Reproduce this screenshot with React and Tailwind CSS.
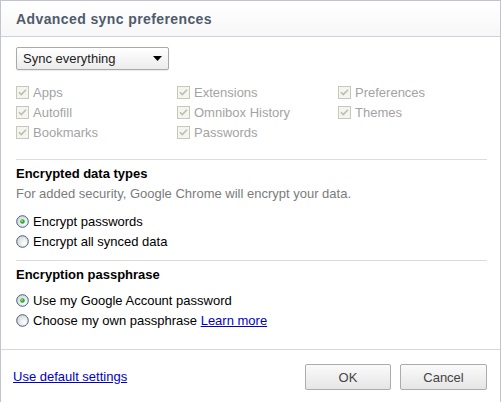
import React from "react";

const font = { fontFamily: '"Liberation Sans", Arial, sans-serif' };

function Check({ label }) {
  return (
    <div className="flex h-[20px] items-center">
      <svg width="13" height="13" viewBox="0 0 13 13" className="shrink-0">
        <rect x="0.5" y="0.5" width="12" height="12" fill="#f5f5f0" stroke="#c9c7ba" />
        <path d="M3 6.2 L5.3 8.6 L10 3.8" fill="none" stroke="#bdbcae" strokeWidth="1.6" />
      </svg>
      <span className="ml-[4px] text-[13px] leading-none text-[#a3a3a3]">{label}</span>
    </div>
  );
}

function Radio({ checked, children }) {
  return (
    <div className="flex h-[20px] items-center">
      <svg width="13" height="13" viewBox="0 0 13 13" className="shrink-0">
        <defs>
          <radialGradient id="rg" cx="0.65" cy="0.65" r="0.7">
            <stop offset="0" stopColor="#ffffff" />
            <stop offset="1" stopColor="#d6d6ce" />
          </radialGradient>
        </defs>
        <circle cx="6.5" cy="6.5" r="5.8" fill="url(#rg)" stroke="#3f5f8c" strokeWidth="1" />
        {checked && <circle cx="6.5" cy="6.5" r="2.3" fill="#2aa83a" />}
        {checked && <circle cx="6" cy="6" r="0.9" fill="#8ee08f" />}
      </svg>
      <span className="ml-[4px] text-[13px] leading-none text-black">{children}</span>
    </div>
  );
}

export default function App() {
  return (
    <div style={font} className="h-[402px] w-[502px] bg-white">
      <div className="flex h-[402px] w-[501px] flex-col border-x border-t border-[#bfc4cf] bg-white">
        <div className="flex h-[36px] shrink-0 items-center border-b border-[#cdd1da] bg-gradient-to-b from-[#ffffff] to-[#f7f7f7] pl-[15px]">
          <span className="text-[14px] font-bold leading-none tracking-[0.4px] text-[#4f5a6c]">
            Advanced sync preferences
          </span>
        </div>

        <div className="flex flex-col pl-[15px] pr-[13px]">
          <div className="mt-[10px] flex h-[23px] w-[153px] items-center justify-between rounded-[2px] border border-[#a9a9a9] bg-gradient-to-b from-[#ffffff] to-[#ececec] pl-[6px] pr-[6px] shadow-[0_1px_1px_rgba(0,0,0,0.08)]">
            <span className="text-[13px] leading-none text-[#222]">Sync everything</span>
            <svg width="9" height="5" viewBox="0 0 9 5">
              <path d="M0 0 H9 L4.5 5 Z" fill="#000" />
            </svg>
          </div>

          <div className="mt-[12px] grid grid-cols-[161px_161px_1fr]">
            <div className="flex flex-col">
              <Check label="Apps" />
              <Check label="Autofill" />
              <Check label="Bookmarks" />
            </div>
            <div className="flex flex-col">
              <Check label="Extensions" />
              <Check label="Omnibox History" />
              <Check label="Passwords" />
            </div>
            <div className="flex flex-col">
              <Check label="Preferences" />
              <Check label="Themes" />
            </div>
          </div>

          <div className="mt-[17px] h-px bg-[#dcdcdc]" />

          <div className="mt-[3px] flex h-[20px] items-center">
            <span className="text-[13px] font-bold leading-none text-black">Encrypted data types</span>
          </div>
          <div className="flex h-[20px] items-center">
            <span className="text-[13px] leading-none text-[#7b7b7b]">
              For added security, Google Chrome will encrypt your data.
            </span>
          </div>
          <div className="mt-[8px] flex flex-col">
            <Radio checked>Encrypt passwords</Radio>
            <Radio>Encrypt all synced data</Radio>
          </div>

          <div className="mt-[9px] h-px bg-[#dcdcdc]" />

          <div className="mt-[3px] flex h-[20px] items-center">
            <span className="text-[13px] font-bold leading-none text-black">Encryption passphrase</span>
          </div>
          <div className="mt-[6px] flex flex-col">
            <Radio checked>Use my Google Account password</Radio>
            <Radio>
              Choose my own passphrase{" "}
              <a href="#" className="text-[#0000cc] underline">
                Learn more
              </a>
            </Radio>
          </div>
        </div>

        <div className="mt-[19px] flex items-start justify-between border-t border-[#d5d8e0] pl-[12px] pr-[13px] pt-[14px]">
          <a href="#" className="mt-[6px] text-[13px] leading-none text-[#0000cc] underline">
            Use default settings
          </a>
          <div className="flex gap-[9px]">
            <button className="flex h-[26px] w-[86px] items-center justify-center rounded-[2px] border border-[#acacac] bg-gradient-to-b from-[#fafafa] to-[#e6e6e6] text-[13px] leading-none text-[#444]">
              OK
            </button>
            <button className="flex h-[26px] w-[87px] items-center justify-center rounded-[2px] border border-[#acacac] bg-gradient-to-b from-[#fafafa] to-[#e6e6e6] text-[13px] leading-none text-[#444]">
              Cancel
            </button>
          </div>
        </div>
      </div>
    </div>
  );
}
